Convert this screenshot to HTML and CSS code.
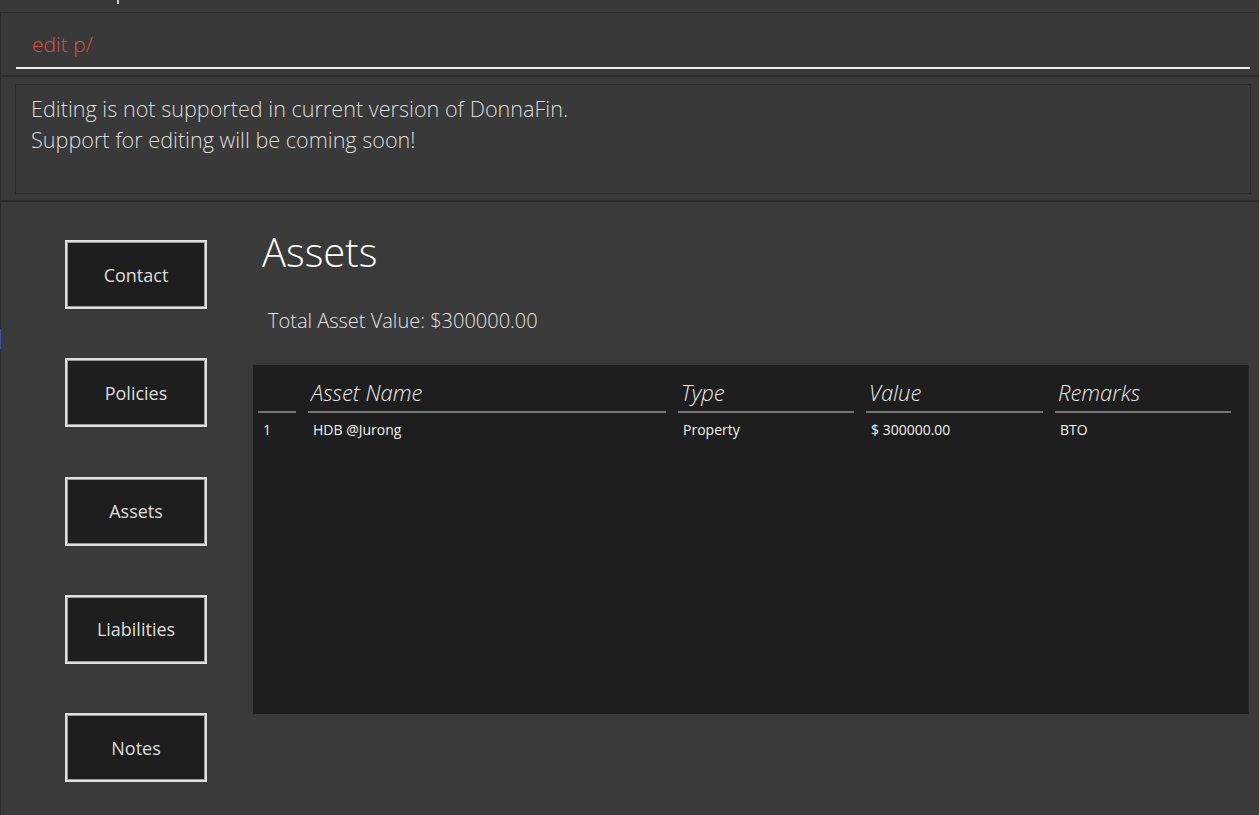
FILE: index.html
```html
<!DOCTYPE html>
<html lang="en">
<head>
<meta charset="utf-8">
<title>DonnaFin</title>
<link rel="stylesheet" href="styles.css">
</head>
<body>
<div class="app">
  <div class="topbar"><span class="tick"></span></div>
  <div class="frame">
    <span class="edge-mark"></span>
    <div class="cmd">
      <div class="cmd-input">edit p/</div>
    </div>
    <div class="result">
      <div class="result-box">
        <p>Editing is not supported in current version of DonnaFin.</p>
        <p>Support for editing will be coming soon!</p>
      </div>
    </div>
    <div class="main">
      <nav class="sidebar">
        <div class="tab">Contact</div>
        <div class="tab">Policies</div>
        <div class="tab">Assets</div>
        <div class="tab">Liabilities</div>
        <div class="tab">Notes</div>
      </nav>
      <section class="content">
        <h1 class="title">Assets</h1>
        <div class="total">Total Asset Value: $300000.00</div>
        <div class="table">
          <div class="row head">
            <div class="cell"><span class="hd"></span></div>
            <div class="cell"><span class="hd">Asset Name</span></div>
            <div class="cell"><span class="hd">Type</span></div>
            <div class="cell"><span class="hd">Value</span></div>
            <div class="cell"><span class="hd">Remarks</span></div>
          </div>
          <div class="row body">
            <div class="cell idx">1</div>
            <div class="cell">HDB @Jurong</div>
            <div class="cell">Property</div>
            <div class="cell">$ 300000.00</div>
            <div class="cell">BTO</div>
          </div>
        </div>
      </section>
    </div>
  </div>
</div>
</body>
</html>
```

FILE: styles.css
```css
html, body {
  margin: 0;
  padding: 0;
  background: #3a3a3a;
}
body {
  width: 1259px;
  height: 815px;
  overflow: hidden;
  font-family: "Open Sans", "Liberation Sans", sans-serif;
  color: #e2e2e2;
}
.app {
  display: flex;
  flex-direction: column;
  height: 815px;
}
.topbar {
  height: 12px;
  box-sizing: border-box;
  padding-left: 117px;
  background: #393939;
}
.tick {
  display: block;
  width: 2px;
  height: 4px;
  background: #c8c8c8;
}
.frame {
  position: relative;
  flex: 1;
  display: flex;
  flex-direction: column;
  border-left: 1px solid #2b2b2b;
}
.edge-mark {
  position: absolute;
  left: -1px;
  top: 317px;
  width: 1px;
  height: 20px;
  background: #4848a8;
}
.cmd {
  border-top: 1px solid #2e2e2e;
  border-bottom: 2px solid #2c2c2c;
  height: 62px;
  box-sizing: content-box;
  padding: 0 9px 0 15px;
  background: #393939;
}
.cmd-input {
  height: 36px;
  padding: 18px 0 0 16px;
  border-bottom: 2px solid #ececec;
  font-size: 21px;
  font-weight: 300;
  line-height: 27px;
  color: #d4553f;
}
.result {
  height: 125px;
  box-sizing: border-box;
  padding: 7px 8px 0 14px;
  border-bottom: 2px solid #2c2c2c;
  background: #393939;
}
.result-box {
  height: 110px;
  box-sizing: border-box;
  border: 1px solid #2b2b2b;
  padding: 8px 15px 0;
}
.result-box p {
  margin: 0;
  font-size: 21.6px;
  font-weight: 300;
  line-height: 31px;
  color: #dcdcdc;
}
.main {
  flex: 1;
  display: flex;
  background: #3a3a3a;
}
.sidebar {
  width: 252px;
  box-sizing: border-box;
  padding: 38px 0 0 64px;
  display: flex;
  flex-direction: column;
  gap: 49.3px;
}
.tab {
  width: 142px;
  height: 69px;
  box-sizing: border-box;
  border: 2px solid #e0e0e0;
  box-shadow: inset 0 0 0 1px #9a9a9a;
  background: #1e1e1e;
  display: flex;
  align-items: center;
  justify-content: center;
  font-size: 18px;
  color: #dedede;
}
.content {
  width: 996px;
  padding-top: 30px;
}
.title {
  margin: 0;
  padding-left: 9px;
  font-size: 40px;
  font-weight: 300;
  line-height: 40px;
  color: #ffffff;
}
.total {
  margin-top: 39px;
  padding-left: 15px;
  font-size: 20px;
  font-weight: 300;
  line-height: 19px;
  color: #e4e4e4;
}
.table {
  margin-top: 35px;
  height: 349px;
  background: #1e1e1e;
  border-right: 1px solid #2a2a2a;
  box-sizing: border-box;
}
.row {
  display: grid;
  grid-template-columns: 49px 370px 188px 189px 188px;
}
.head .cell {
  height: 48px;
  display: flex;
  align-items: flex-end;
  padding: 0 6px 0 6px;
}
.head .cell:first-child {
  padding-left: 5px;
}
.hd {
  flex: 1;
  box-sizing: border-box;
  height: 100%;
  display: flex;
  align-items: flex-end;
  padding: 0 0 8px 3px;
  border-bottom: 2px solid #767676;
  font-size: 22px;
  font-style: italic;
  font-weight: 300;
  line-height: 22px;
  color: #ececec;
}
.body .cell {
  padding: 7px 6px 0 11px;
  font-size: 14px;
  line-height: 19.6px;
  color: #f2f2f2;
}
.body .cell.idx {
  padding-left: 10px;
  color: #e8e8e8;
}
```
